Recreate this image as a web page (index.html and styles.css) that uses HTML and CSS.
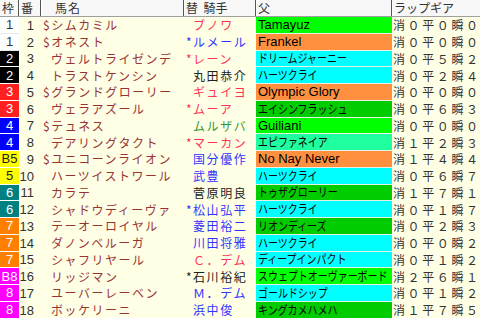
FILE: index.html
```html
<!DOCTYPE html>
<html lang="ja">
<head>
<meta charset="utf-8">
<link rel="stylesheet" href="styles.css">
</head>
<body>
<div class="sheet">
  <div class="head">
    <div class="h h-waku">枠</div>
    <div class="h h-num">番</div>
    <div class="h h-name">馬名</div>
    <div class="h h-jockey">替&nbsp;&nbsp;騎手</div>
    <div class="h h-sire">父</div>
    <div class="h h-gear">ラップギア</div>
  </div>
  <div class="rows">
    <div class="c waku w1">1</div><div class="c num">1</div><div class="c name">$シムカミル</div><div class="c mark"></div><div class="c jockey red">ブノワ</div><div class="c sire g1">Tamayuz</div><div class="c gear">消０平０瞬０</div>
    <div class="c waku w1">1</div><div class="c num">2</div><div class="c name">$オネスト</div><div class="c mark blue">*</div><div class="c jockey blue">ルメール</div><div class="c sire or">Frankel</div><div class="c gear">消０平０瞬０</div>
    <div class="c waku w2">2</div><div class="c num">3</div><div class="c name ind">ヴェルトライゼンデ</div><div class="c mark red">*</div><div class="c jockey red">レーン</div><div class="c sire cy"><span class="jp">ドリームジャーニー</span></div><div class="c gear">消０平５瞬２</div>
    <div class="c waku w2">2</div><div class="c num">4</div><div class="c name ind">トラストケンシン</div><div class="c mark"></div><div class="c jockey dark">丸田恭介</div><div class="c sire cy"><span class="jp">ハーツクライ</span></div><div class="c gear">消０平２瞬４</div>
    <div class="c waku w3">3</div><div class="c num">5</div><div class="c name">$グランドグローリー</div><div class="c mark"></div><div class="c jockey red">ギュイヨ</div><div class="c sire or">Olympic Glory</div><div class="c gear">消０平０瞬０</div>
    <div class="c waku w3">3</div><div class="c num">6</div><div class="c name ind">ヴェラアズール</div><div class="c mark red">*</div><div class="c jockey red">ムーア</div><div class="c sire g2"><span class="jp">エイシンフラッシュ</span></div><div class="c gear">消０平６瞬３</div>
    <div class="c waku w4">4</div><div class="c num">7</div><div class="c name">$テュネス</div><div class="c mark"></div><div class="c jockey green">ムルザバ</div><div class="c sire g1">Guiliani</div><div class="c gear">消０平０瞬０</div>
    <div class="c waku w4">4</div><div class="c num">8</div><div class="c name ind">デアリングタクト</div><div class="c mark red">*</div><div class="c jockey red">マーカン</div><div class="c sire aq"><span class="jp">エピファネイア</span></div><div class="c gear">消１平２瞬３</div>
    <div class="c waku w5">B5</div><div class="c num">9</div><div class="c name">$ユニコーンライオン</div><div class="c mark"></div><div class="c jockey blue">国分優作</div><div class="c sire or">No Nay Never</div><div class="c gear">消１平４瞬４</div>
    <div class="c waku w5">5</div><div class="c num">10</div><div class="c name ind">ハーツイストワール</div><div class="c mark"></div><div class="c jockey blue">武豊</div><div class="c sire cy"><span class="jp">ハーツクライ</span></div><div class="c gear">消０平６瞬７</div>
    <div class="c waku w6">6</div><div class="c num">11</div><div class="c name ind">カラテ</div><div class="c mark"></div><div class="c jockey dark">菅原明良</div><div class="c sire g2"><span class="jp">トゥザグローリー</span></div><div class="c gear">消１平７瞬１</div>
    <div class="c waku w6">6</div><div class="c num">12</div><div class="c name ind">シャドウディーヴァ</div><div class="c mark blue">*</div><div class="c jockey blue">松山弘平</div><div class="c sire cy"><span class="jp">ハーツクライ</span></div><div class="c gear">消０平１瞬７</div>
    <div class="c waku w7">7</div><div class="c num">13</div><div class="c name ind">テーオーロイヤル</div><div class="c mark"></div><div class="c jockey blue">菱田裕二</div><div class="c sire g2"><span class="jp">リオンディーズ</span></div><div class="c gear">消０平２瞬３</div>
    <div class="c waku w7">7</div><div class="c num">14</div><div class="c name ind">ダノンベルーガ</div><div class="c mark"></div><div class="c jockey blue">川田将雅</div><div class="c sire cy"><span class="jp">ハーツクライ</span></div><div class="c gear">消０平０瞬２</div>
    <div class="c waku w7">7</div><div class="c num">15</div><div class="c name ind">シャフリヤール</div><div class="c mark"></div><div class="c jockey red">Ｃ．デム</div><div class="c sire cy"><span class="jp">ディープインパクト</span></div><div class="c gear">消０平１瞬２</div>
    <div class="c waku w8">B8</div><div class="c num">16</div><div class="c name ind">リッジマン</div><div class="c mark dark">*</div><div class="c jockey dark">石川裕紀</div><div class="c sire g1"><span class="jp">スウェプトオーヴァーボード</span></div><div class="c gear">消２平６瞬１</div>
    <div class="c waku w8">8</div><div class="c num">17</div><div class="c name ind">ユーバーレーベン</div><div class="c mark"></div><div class="c jockey blue">Ｍ．デム</div><div class="c sire cy"><span class="jp">ゴールドシップ</span></div><div class="c gear">消０平１瞬２</div>
    <div class="c waku w8">8</div><div class="c num">18</div><div class="c name ind">ボッケリーニ</div><div class="c mark"></div><div class="c jockey blue">浜中俊</div><div class="c sire g2"><span class="jp">キングカメハメハ</span></div><div class="c gear">消１平７瞬５</div>
  </div>
</div>
</body>
</html>
```
FILE: styles.css
```css
html, body {
  margin: 0;
  padding: 0;
  background: #ffffe6;
}
.sheet {
  width: 480px;
  height: 318px;
  overflow: hidden;
  font-family: "Noto Sans CJK JP", "Noto Sans", sans-serif;
  font-size: 12px;
  color: #333;
}
.head {
  display: grid;
  grid-template-columns: 19px 22px 143px 72px 136px 88px;
  height: 16px;
  background: #f8f8f8;
  border-bottom: 1px solid #a0a0a0;
}
.h {
  display: flex;
  align-items: center;
  padding-left: 2px;
  color: #333;
  border-right: 1px solid #555;
  box-shadow: 1px 0 0 #fff;
  line-height: 1;
}
.h-gear { border-right: none; }
.h-name { padding-left: 14px; letter-spacing: 1px; }
.rows {
  display: grid;
  grid-template-columns: 19px 22px 144px 8px 63px 136px 88px;
  grid-auto-rows: 16.75px;
}
.c {
  display: flex;
  align-items: center;
  white-space: nowrap;
  overflow: hidden;
  line-height: 1;
}
.waku {
  justify-content: center;
  font-family: "Liberation Sans", sans-serif;
  font-size: 13px;
  color: #fff;
  border-bottom: 1px solid #fff;
}
.w1 { background: #fff; color: #333; border-bottom-color: #e8e8e8; }
.w2 { background: #000; }
.w3 { background: #ff2020; }
.w4 { background: #0000ff; }
.w5 { background: #ffff00; color: #222; }
.w6 { background: #008080; }
.w7 { background: #ff8000; }
.w8 { background: #ff00ff; }
.num {
  justify-content: flex-end;
  padding-right: 7px;
  font-family: "Liberation Sans", sans-serif;
  font-size: 13px;
  color: #333;
}
.name {
  padding-left: 2px;
  color: #993333;
  letter-spacing: 1.5px;
}
.name.ind { padding-left: 10px; }
.mark {
  justify-content: flex-start;
  padding-left: 1px;
  font-size: 12px;
}
.jockey {
  letter-spacing: 1.6px;
}
.red { color: #ff3355; }
.blue { color: #3333ff; }
.green { color: #339933; }
.dark { color: #222; }
.sire {
  padding-left: 2px;
  color: #000;
  border-bottom: 1px solid #e6f0e6;
  font-family: "Liberation Sans", sans-serif;
  font-size: 13px;
}
.sire .jp {
  display: inline-block;
  font-family: "Noto Sans CJK JP", sans-serif;
  font-size: 12px;
  transform: scaleX(0.83);
  transform-origin: left center;
}
.g1 { background: #00ff00; }
.g2 { background: #00cc00; }
.cy { background: #00ffff; }
.or { background: #ff9040; }
.aq { background: #20ffa0; }
.gear {
  padding-left: 1px;
  color: #333;
  letter-spacing: 2.6px;
}
```
